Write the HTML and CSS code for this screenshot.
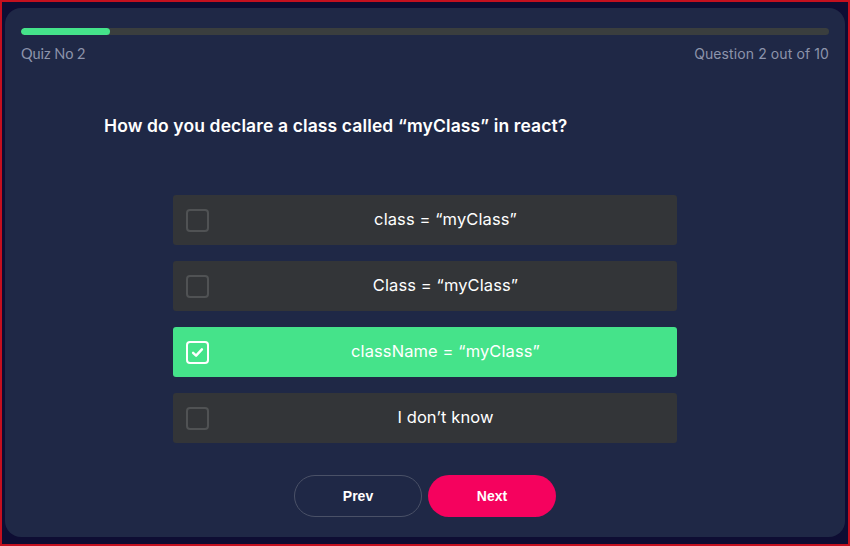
FILE: index.html
```html
<!DOCTYPE html>
<html lang="en">
<head>
<meta charset="utf-8">
<title>Quiz</title>
<link rel="stylesheet" href="styles.css">
</head>
<body>
<div class="frame">
  <main class="card">
    <div class="progress"><div class="progress-fill" style="width: 11%"></div></div>
    <div class="meta">
      <span>Quiz No 2</span>
      <span class="meta-right">Question 2 out of 10</span>
    </div>
    <h1 class="question">How do you declare a class called “myClass” in react?</h1>
    <ul class="options">
      <li class="option"><span class="box"></span><span class="label">class = “myClass”</span></li>
      <li class="option"><span class="box"></span><span class="label">Class = “myClass”</span></li>
      <li class="option selected"><span class="box"><svg viewBox="0 0 16 16" width="15" height="15"><path d="M3.3 8.4 L6.5 11.4 L12.7 4.6" fill="none" stroke="#fff" stroke-width="2.6" stroke-linecap="round" stroke-linejoin="round"/></svg></span><span class="label">className = “myClass”</span></li>
      <li class="option"><span class="box"></span><span class="label">I don’t know</span></li>
    </ul>
    <div class="actions">
      <button class="btn btn-prev">Prev</button>
      <button class="btn btn-next">Next</button>
    </div>
  </main>
</div>
</body>
</html>
```

FILE: styles.css
```css
* { box-sizing: border-box; }
html, body { margin: 0; padding: 0; }
body {
  width: 850px;
  height: 546px;
  background: #0e0d33;
  font-family: "Inter", "Liberation Sans", sans-serif;
}
.frame {
  width: 850px;
  height: 546px;
  border: 2px solid #c4101f;
  padding: 6px 3px 7px 3px;
}
.card {
  height: 529px;
  background: #1f2846;
  border-radius: 16px;
  padding: 20px 16px 0 16px;
  display: flex;
  flex-direction: column;
}
.progress {
  height: 7px;
  background: #3a3e3e;
  border-radius: 4px;
  overflow: hidden;
}
.progress-fill {
  height: 100%;
  background: #45e38a;
  border-radius: 4px;
}
.meta {
  display: flex;
  justify-content: space-between;
  margin-top: 10px;
  font-family: "Lato", sans-serif;
  font-size: 14.5px;
  color: #8d94ab;
  line-height: 18px;
}
.meta-right {
  font-family: "Inter", sans-serif;
  font-size: 14px;
  letter-spacing: 0.1px;
}
.question {
  margin: 52px 0 0 83px;
  font-size: 17.5px;
  font-weight: 600;
  color: #ffffff;
  line-height: 22px;
  letter-spacing: 0.12px;
}
.options {
  list-style: none;
  margin: 58px 0 0 152px;
  padding: 0;
  width: 504px;
  display: flex;
  flex-direction: column;
  gap: 16px;
}
.option {
  height: 50px;
  background: #333538;
  border-radius: 3px;
  display: flex;
  align-items: center;
  padding-left: 13px;
  color: #ffffff;
  font-size: 16.5px;
  letter-spacing: 0.1px;
}
.option.selected { background: #45e38a; }
.box {
  width: 23px;
  height: 23px;
  border: 2px solid #505254;
  border-radius: 4px;
  display: flex;
  align-items: center;
  justify-content: center;
  flex: none;
}
.selected .box { border: 2.5px solid #ffffff; }
.label {
  flex: 1;
  text-align: center;
  padding-left: 5px;
  padding-bottom: 3px;
}
.actions {
  margin-top: 32px;
  display: flex;
  justify-content: center;
  gap: 6px;
}
.btn {
  width: 128px;
  height: 42px;
  border-radius: 21px;
  font-family: "Liberation Sans", sans-serif;
  font-weight: 700;
  font-size: 14px;
  color: #ffffff;
  cursor: pointer;
}
.btn-prev {
  background: transparent;
  border: 1px solid #4a5167;
}
.btn-next {
  background: #f5025e;
  border: none;
}
```
